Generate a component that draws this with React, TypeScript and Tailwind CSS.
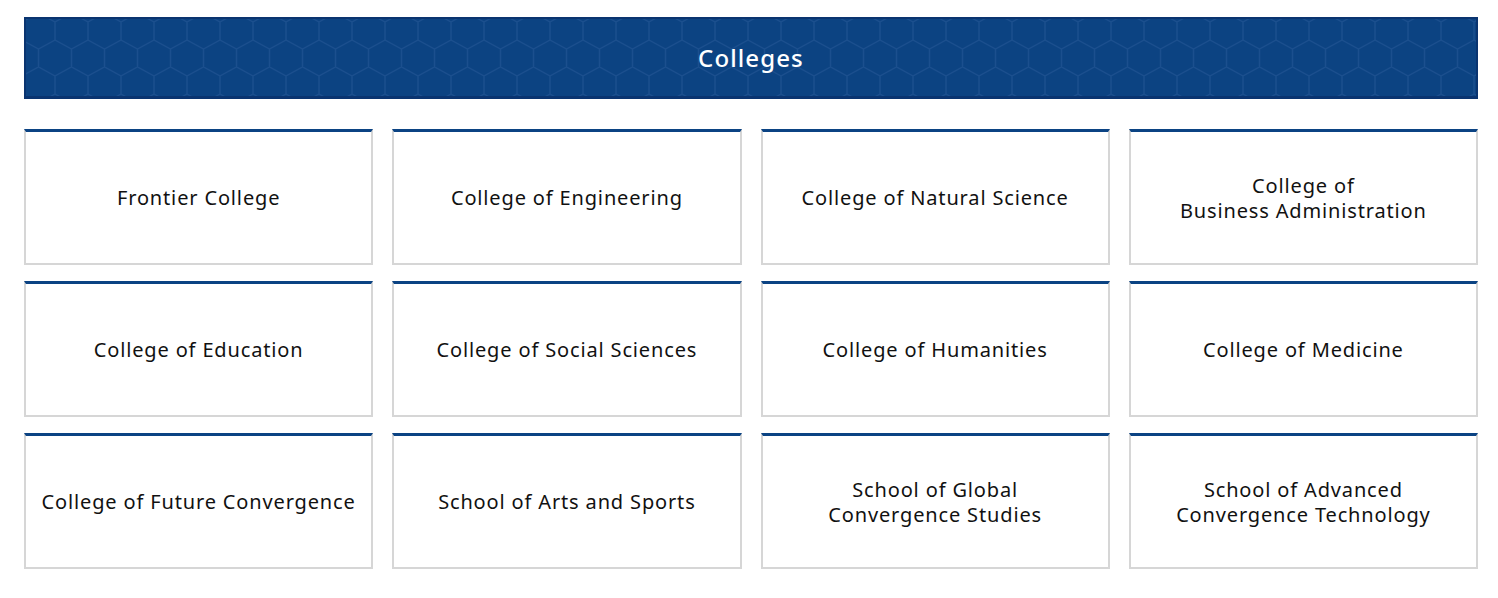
const colleges: string[][] = [
  ["Frontier College"],
  ["College of Engineering"],
  ["College of Natural Science"],
  ["College of", "Business Administration"],
  ["College of Education"],
  ["College of Social Sciences"],
  ["College of Humanities"],
  ["College of Medicine"],
  ["College of Future Convergence"],
  ["School of Arts and Sports"],
  ["School of Global", "Convergence Studies"],
  ["School of Advanced", "Convergence Technology"],
];

function HexPattern() {
  return (
    <svg className="absolute inset-0 h-full w-full" aria-hidden="true">
      <defs>
        <pattern id="hex" width="33" height="54" patternUnits="userSpaceOnUse" x="-4" y="-6">
          <path
            d="M16.5 0 L33 9 V27 L16.5 36 L0 27 V9 Z M16.5 36 V54"
            fill="none"
            stroke="#1b4f8e"
            strokeWidth="1.4"
          />
        </pattern>
      </defs>
      <rect width="100%" height="100%" fill="url(#hex)" />
    </svg>
  );
}

function CollegeCard({ lines }: { lines: string[] }) {
  return (
    <div className="flex h-[136px] flex-col items-center justify-center border-2 border-t-[3px] border-[#d6d6d6] border-t-[#0b4383] bg-white text-center text-[20px] leading-[25px] tracking-[0.85px] text-[#111]">
      {lines.map((l) => (
        <span key={l}>{l}</span>
      ))}
    </div>
  );
}

export default function App() {
  return (
    <div className="min-h-[598px] w-full bg-white pl-6 pr-5 pt-[17px] font-['Noto_Sans','Open_Sans',sans-serif]">
      <div className="relative flex h-[82px] items-center justify-center overflow-hidden border-2 border-b-[3px] border-[#0a3470] bg-[#0c4382]">
        <HexPattern />
        <h1 className="relative text-[24px] font-medium tracking-[1.1px] text-white">Colleges</h1>
      </div>

      <div className="mt-[30px] grid grid-cols-4 gap-x-[19px] gap-y-4">
        {colleges.map((c) => (
          <CollegeCard key={c.join(" ")} lines={c} />
        ))}
      </div>
    </div>
  );
}
